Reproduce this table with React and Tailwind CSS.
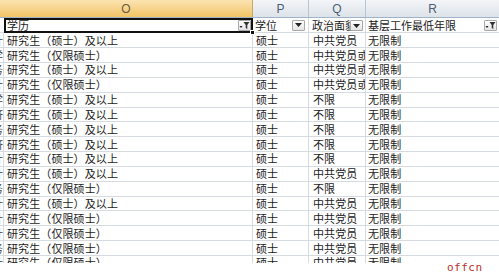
const rows = [
  ["研究生（硕士）及以上", "硕士", "中共党员", "无限制"],
  ["研究生（仅限硕士）", "硕士", "中共党员或共青团员", "无限制"],
  ["研究生（硕士）及以上", "硕士", "中共党员或共青团员", "无限制"],
  ["研究生（仅限硕士）", "硕士", "中共党员或共青团员", "无限制"],
  ["研究生（硕士）及以上", "硕士", "不限", "无限制"],
  ["研究生（硕士）及以上", "硕士", "不限", "无限制"],
  ["研究生（硕士）及以上", "硕士", "不限", "无限制"],
  ["研究生（硕士）及以上", "硕士", "不限", "无限制"],
  ["研究生（硕士）及以上", "硕士", "不限", "无限制"],
  ["研究生（硕士）及以上", "硕士", "中共党员", "无限制"],
  ["研究生（仅限硕士）", "硕士", "不限", "无限制"],
  ["研究生（硕士）及以上", "硕士", "中共党员", "无限制"],
  ["研究生（仅限硕士）", "硕士", "中共党员", "无限制"],
  ["研究生（仅限硕士）", "硕士", "中共党员", "无限制"],
  ["研究生（仅限硕士）", "硕士", "中共党员", "无限制"],
  ["研究生（仅限硕士）", "硕士", "中共党员", "无限制"],
];
const nFrag = ["会计", "会计学", "财务", "会计", "金融学", "经济", "财务", "经济", "审计", "会计", "财务", "会计", "会计", "会计", "财务", "会计"];

function Dropdown() {
  return (
    <div className="w-[13px] h-[11px] border border-[#a9a9a9] rounded-[1px] bg-gradient-to-b from-[#ffffff] to-[#e4e4e4] flex items-center justify-center">
      <svg width="7" height="4" viewBox="0 0 7 4"><path d="M0 0h7L3.5 4z" fill="#222" /></svg>
    </div>
  );
}
function FilterBtn() {
  return (
    <div className="w-[13px] h-[11px] border border-[#a9a9a9] rounded-[1px] bg-gradient-to-b from-[#ffffff] to-[#e4e4e4] flex items-center justify-center">
      <svg width="11" height="9" viewBox="0 0 11 9">
        <path d="M0.5 5h3L2 7z" fill="#222" />
        <path d="M4.5 1h6L8.3 4v4L6.7 7V4z" fill="#333" />
      </svg>
    </div>
  );
}

export default function App() {
  const font = "font-['SimSun','Noto_Sans_CJK_SC',sans-serif]";
  return (
    <div className="w-[499px] h-[274px] bg-white overflow-hidden relative font-['Noto_Sans_CJK_SC',sans-serif] text-[#1c1c1c]">
      {/* column header */}
      <div className="flex h-[18px] border-b border-[#9fb3c9] font-['Liberation_Sans',sans-serif] text-[12px] leading-none">
        <div className="w-[253px] shrink-0 bg-gradient-to-b from-[#fbe3b1] to-[#f2c463] border-r border-[#c9a86a] flex items-center justify-center text-[#6b5d3e]">O</div>
        <div className="w-[56px] shrink-0 bg-gradient-to-b from-[#f3f5f8] to-[#dde3ea] border-r border-[#b7c4d3] flex items-center justify-center text-[#4d5d72]">P</div>
        <div className="w-[57px] shrink-0 bg-gradient-to-b from-[#f3f5f8] to-[#dde3ea] border-r border-[#b7c4d3] flex items-center justify-center text-[#4d5d72]">Q</div>
        <div className="flex-1 bg-gradient-to-b from-[#f3f5f8] to-[#dde3ea] flex items-center justify-center text-[#4d5d72]">R</div>
      </div>
      {/* filter row */}
      <div className="flex h-[15.3px] text-[11px] leading-none relative">
        <div className="w-[4px] shrink-0 border-b border-[#d6dbe2]" />
        <div className="w-[249px] shrink-0 border-2 border-[#111] flex items-center justify-between pl-[1px] pr-[0px] relative">
          <span>学历</span>
          <FilterBtn />
          <div className="absolute right-[-4px] bottom-[-4px] w-[5px] h-[5px] bg-[#111] border border-white" />
        </div>
        <div className="w-[56px] shrink-0 border-r border-b border-[#d6dbe2] flex items-center justify-between pl-[2px] pr-[3px]">
          <span>学位</span>
          <Dropdown />
        </div>
        <div className="w-[57px] shrink-0 border-r border-b border-[#d6dbe2] flex items-center pl-[3px] relative overflow-hidden">
          <span className="whitespace-nowrap">政治面貌</span>
          <div className="absolute right-[2px] top-[2px]"><Dropdown /></div>
        </div>
        <div className="flex-1 border-b border-[#d6dbe2] flex items-center justify-between pl-[2px] pr-[2px]">
          <span className="whitespace-nowrap">基层工作最低年限</span>
          <FilterBtn />
        </div>
      </div>
      {/* data rows */}
      {rows.map((r, i) => (
        <div key={i} className="flex h-[14.85px] text-[11px] leading-none tracking-[0.1px] border-b border-[#d6dbe2]">
          <div className="w-[4px] shrink-0 overflow-hidden flex items-center justify-end border-r border-[#d6dbe2]">
            <span className="whitespace-nowrap text-[#444]">{nFrag[i]}</span>
          </div>
          <div className="w-[249px] shrink-0 flex items-center pl-[3px] border-r border-[#d6dbe2]">{r[0]}</div>
          <div className="w-[56px] shrink-0 flex items-center pl-[3px] border-r border-[#d6dbe2]">{r[1]}</div>
          <div className="w-[57px] shrink-0 flex items-center pl-[4px] overflow-hidden border-r border-[#d6dbe2]">
            <span className="whitespace-nowrap">{r[2]}</span>
          </div>
          <div className="flex-1 flex items-center pl-[2px]">{r[3]}</div>
        </div>
      ))}
      {/* bottom fade with watermark */}
      <div className="absolute left-0 right-0 bottom-0 h-[11px] bg-white">
        <span className="absolute left-[447px] top-[-1px] text-[11px] leading-none font-['DejaVu_Sans_Mono',monospace] text-[#b8312f] tracking-[0.5px]">offcn</span>
      </div>
    </div>
  );
}
